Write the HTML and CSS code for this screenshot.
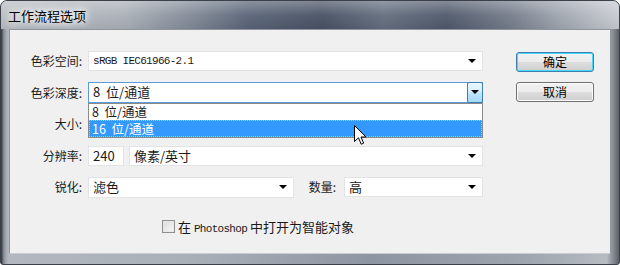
FILE: index.html
```html
<!DOCTYPE html>
<html lang="zh-CN">

<head>
    <meta charset="UTF-8">
    <title>工作流程选项</title>
    <link rel="stylesheet" href="styles.css">
</head>

<body>
    <div class="window">
        <div class="titlebar"><span class="title">工作流程选项</span></div>

        <div class="client">
            <div class="form">
                <div class="rows">
                    <label class="lbl">色彩空间:</label>
                    <div class="combo mono">sRGB IEC61966-2.1<span class="arrow"></span></div>

                    <label class="lbl">色彩深度:</label>
                    <div class="combo focus">
                        8&nbsp; 位/通道
                        <span class="drop-btn"><span class="arrow"></span></span>
                        <!-- 展开的下拉列表 -->
                        <ul class="list">
                            <li>8&nbsp; 位/通道</li>
                            <li class="sel">16&nbsp; 位/通道</li>
                        </ul>
                    </div>

                    <label class="lbl">大小:</label>
                    <div class="combo"></div>

                    <label class="lbl">分辨率:</label>
                    <div class="pair">
                        <div class="field small">240</div>
                        <div class="combo">像素/英寸<span class="arrow"></span></div>
                    </div>

                    <label class="lbl">锐化:</label>
                    <div class="pair">
                        <div class="combo sharpen">滤色<span class="arrow"></span></div>
                        <label class="lbl amount">数量:</label>
                        <div class="combo">高<span class="arrow"></span></div>
                    </div>
                </div>

                <div class="check-row">
                    <span class="checkbox"></span>
                    <span>在 <span class="mono-text">Photoshop</span> 中打开为智能对象</span>
                </div>
            </div>

            <div class="buttons">
                <button class="btn default">确定</button>
                <button class="btn">取消</button>
            </div>
        </div>

        <!-- 鼠标指针 -->
        <svg class="cursor" width="13" height="21" viewBox="0 0 13 21">
            <path d="M0.5 0.5 L0.5 16.5 L4.5 12.8 L7.2 19.2 L9.6 18.2 L7 12 L12 12 Z" fill="#fff" stroke="#000" stroke-width="1" stroke-linejoin="round" />
        </svg>
    </div>
</body>

</html>
```

FILE: styles.css
```css
body {
    margin: 0;
    padding: 0;
    background: #fff;
    font-family: "Noto Sans CJK SC", "Noto Sans", sans-serif;
    font-size: 12px;
    color: #1a1a1a;
}

.window {
    position: relative;
    width: 620px;
    height: 265px;
    box-sizing: border-box;
    padding: 0 8px 10px 8px;
    border-radius: 7px 7px 3px 3px;
    border: 1px solid #3c4048;
    background:
        linear-gradient(180deg, rgba(255, 255, 255, 0.25) 0, rgba(255, 255, 255, 0) 30px),
        linear-gradient(90deg, #2e3238 0, #8c939c 3px, #b3b8bf 7px, #aab0b8 30%, #8d95a2 60%, #9fa5ae 85%, #b7bcc2 98%, #5c6168 100%);
    display: flex;
    flex-direction: column;
}

.titlebar {
    height: 28px;
    margin: 0 -8px;
    padding-left: 7px;
    display: flex;
    align-items: center;
    border-radius: 6px 6px 0 0;
    background:
        linear-gradient(180deg, rgba(255, 255, 255, 0.3) 0, rgba(255, 255, 255, 0.05) 50%, rgba(0, 0, 0, 0.05) 100%),
        linear-gradient(90deg, #b9bdc3 0%, #aab0b7 20%, #848c99 30%, #596477 40%, #485264 52%, #646e7e 62%, #4f596b 72%, #737b89 82%, #9da3ad 90%, #c8ccd1 100%);
}

.title {
    font-size: 13px;
    color: #000;
    text-shadow: 0 0 6px #fff, 0 0 10px #fff, 0 0 12px #fff;
}

.client {
    flex: 1;
    display: flex;
    padding-top: 21px;
    background: #f0f0f0;
    border: 1px solid #8e959d;
    border-bottom-color: #c9cdd2;
}

.form {
    width: 474px;
}

.rows {
    display: grid;
    grid-template-columns: 73px 395px;
    column-gap: 5px;
    row-gap: 11.5px;
    grid-auto-rows: 20px;
    align-items: center;
}

.lbl {
    text-align: right;
    line-height: 20px;
    padding-right: 1px;
}

.combo,
.field {
    position: relative;
    height: 20px;
    box-sizing: border-box;
    background: #fff;
    border: 1px solid #e2e3e4;
    padding-left: 4px;
    line-height: 18px;
    font-size: 13px;
}

.mono,
.mono-text {
    font-family: "Liberation Mono", monospace;
    font-size: 11px;
    letter-spacing: -0.7px;
}

.arrow {
    position: absolute;
    right: 6px;
    top: 7px;
    width: 0;
    height: 0;
    border-left: 4px solid transparent;
    border-right: 4px solid transparent;
    border-top: 4px solid #000;
}

.combo.focus {
    height: 21px;
    border-color: #5a9bd8;
}

.drop-btn {
    position: absolute;
    right: -1px;
    top: -1px;
    width: 16px;
    height: 21px;
    box-sizing: border-box;
    border: 1px solid #3c7fb1;
    border-radius: 2px;
    background: linear-gradient(180deg, #eaf6fd 0%, #d9f0fc 45%, #bee6fd 50%, #a7d9f5 100%);
}

.drop-btn .arrow {
    right: 3px;
    top: 7px;
}

.list {
    position: absolute;
    left: -1px;
    right: -1px;
    top: 20px;
    margin: 0;
    padding: 0;
    list-style: none;
    background: #fff;
    border: 1px solid #8a8a8a;
    z-index: 2;
}

.list li {
    height: 16px;
    line-height: 16px;
    padding-left: 3px;
    font-size: 12.5px;
}

.list li.sel {
    height: 17px;
    line-height: 17px;
    background: #3399ff;
    color: #fff;
    outline: 1px dotted #a6cdf4;
    outline-offset: -1px;
}

.pair {
    display: flex;
    align-items: center;
    gap: 5px;
}

.field.small {
    width: 36px;
    flex: none;
}

.pair .combo {
    flex: 1;
}

.pair .combo.sharpen {
    flex: none;
    width: 206px;
    height: 21px;
}

.lbl.amount {
    width: 40px;
    flex: none;
    padding-right: 3px;
    box-sizing: border-box;
}

.check-row {
    display: flex;
    align-items: center;
    gap: 3px;
    margin: 20px 0 0 152px;
    font-size: 13px;
}

.checkbox {
    width: 11px;
    height: 11px;
    border: 1px solid #8f8f8f;
    background: linear-gradient(135deg, #dcdcdc, #f6f6f6);
    box-shadow: inset 0 0 0 1px #e8e8e8;
}

.buttons {
    margin-left: 32px;
    padding-top: 1px;
    display: flex;
    flex-direction: column;
    gap: 10px;
}

.btn {
    width: 78px;
    height: 20px;
    padding: 0;
    font-family: "Noto Sans CJK SC", sans-serif;
    font-size: 12px;
    line-height: 18px;
    color: #000;
    border: 1px solid #707070;
    border-radius: 3px;
    background: linear-gradient(180deg, #f2f2f2 0%, #ebebeb 50%, #dddddd 51%, #cfcfcf 100%);
    box-shadow: inset 0 0 0 1px #fcfcfc;
}

.btn.default {
    border-color: #3c7fb1;
    box-shadow: inset 0 0 0 1px #48d8fb;
}

.cursor {
    position: absolute;
    left: 353px;
    top: 124px;
    z-index: 5;
}
```
